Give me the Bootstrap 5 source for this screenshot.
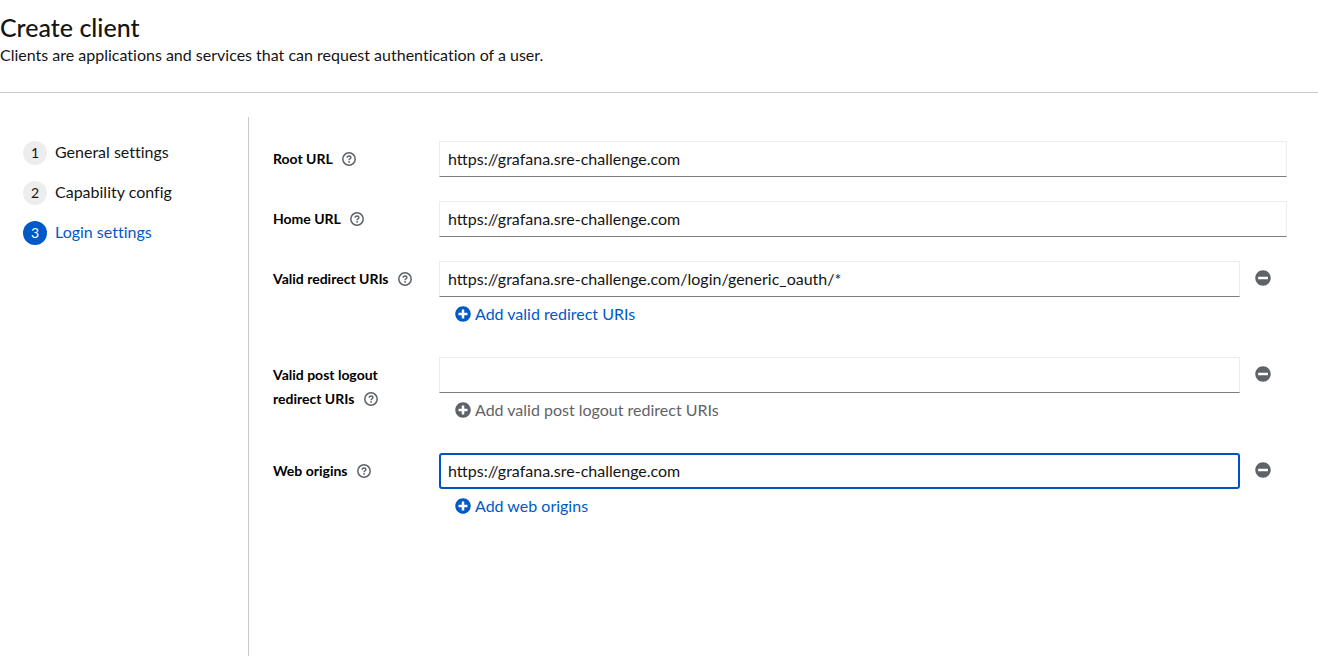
<!DOCTYPE html>
<html lang="en">
<head>
<meta charset="utf-8">
<meta name="viewport" content="width=device-width, initial-scale=1">
<title>Create client</title>
<link href="https://cdn.jsdelivr.net/npm/bootstrap@5.3.0/dist/css/bootstrap.min.css" rel="stylesheet">
<style>
  :root { --ink: #151515; --accent: #0059c8; --muted: #5f6368; --line: #c9c9c9; }
  body { font-family: Lato, "Noto Sans", sans-serif; font-size: 16px; line-height: 24px; font-variant-ligatures: none; color: var(--ink); background: #fff; }
  .page-head { padding: 12px 0 25px; border-bottom: 1px solid var(--line); }
  .page-head h1 { font-size: 25px; line-height: 31px; font-weight: 500; }
  .steps { flex: 0 0 249px; padding: 24px 23px; border-right: 1px solid var(--line); }
  .steps ol { gap: 16px; }
  .steps a { color: var(--ink); gap: 8px; }
  .steps a.current { color: var(--accent); }
  .step-name { padding-bottom: 2px; line-height: 22px; }
  .step-no { width: 24px; height: 24px; font-size: 14px; background: #ededed; }
  .current .step-no { background: var(--accent); color: #fff; }
  .client-form { padding: 24px 31px 24px 24px; gap: 24px; }
  .field { display: grid; grid-template-columns: 150px minmax(0, 1fr); column-gap: 16px; }
  .field-label { padding-top: 6px; font-size: 14px; color: #000; }
  .field-label label { display: inline; font-weight: 700; }
  .field .help { margin-left: 6px; color: var(--muted); line-height: 14px; vertical-align: -2px; }
  .field .form-control { height: 36px; padding: 0 8px 2px; font-size: 16px; color: var(--ink); border: 1px solid #ededed; border-bottom-color: #7c7f82; border-radius: 0; box-shadow: none; }
  .field .form-control.is-current { border: 2px solid #0053c0; border-radius: 3px; padding: 0 7px 2px; }
  .btn-minus { height: 34px; padding: 0 16px 0 15px; color: var(--muted); }
  .btn-add { height: 36px; padding: 0 16px 2px; gap: 4px; font-size: 16px; color: var(--accent); }
  .btn-add:disabled { color: var(--muted); opacity: 1; }
  svg { display: block; fill: currentColor; }
</style>
</head>
<body class="d-flex flex-column min-vh-100">
<svg class="d-none" aria-hidden="true">
  <symbol id="i-plus" viewBox="0 0 512 512"><path d="M256 8C119 8 8 119 8 256s111 248 248 248 248-111 248-248S393 8 256 8zm144 276c0 7-5 12-12 12h-92v92c0 7-5 12-12 12h-56c-7 0-12-5-12-12v-92h-92c-7 0-12-5-12-12v-56c0-7 5-12 12-12h92v-92c0-7 5-12 12-12h56c7 0 12 5 12 12v92h92c7 0 12 5 12 12v56z"/></symbol>
  <symbol id="i-minus" viewBox="0 0 512 512"><path d="M256 8C119 8 8 119 8 256s111 248 248 248 248-111 248-248S393 8 256 8zM112 296c-7 0-12-5-12-12v-56c0-7 5-12 12-12h288c7 0 12 5 12 12v56c0 7-5 12-12 12H112z"/></symbol>
  <symbol id="i-help" viewBox="0 0 14 14"><circle cx="7" cy="7" r="6.200" fill="none" stroke="currentColor" stroke-width="1.500"/><path d="M5.200 5.700C5.200 4.500 6 3.900 7.100 3.900S8.900 4.500 8.900 5.500C8.900 6.700 7.100 6.800 7.100 8.200" fill="none" stroke="currentColor" stroke-width="1.500"/><circle cx="7.100" cy="9.900" r=".9"/></symbol>
</svg>

<header class="page-head">
  <h1 class="mb-0">Create client</h1>
  <p class="mb-0">Clients are applications and services that can request authentication of a user.</p>
</header>

<div class="d-flex flex-grow-1 pt-4">
  <nav class="steps" aria-label="Steps">
    <ol class="list-unstyled d-flex flex-column mb-0">
      <li><a class="d-flex align-items-center text-decoration-none" href="#general"><span class="step-no rounded-circle d-flex align-items-center justify-content-center">1</span><span class="step-name">General settings</span></a></li>
      <li><a class="d-flex align-items-center text-decoration-none" href="#capability"><span class="step-no rounded-circle d-flex align-items-center justify-content-center">2</span><span class="step-name">Capability config</span></a></li>
      <li><a class="current d-flex align-items-center text-decoration-none" href="#login" aria-current="step"><span class="step-no rounded-circle d-flex align-items-center justify-content-center">3</span><span class="step-name">Login settings</span></a></li>
    </ol>
  </nav>

  <form class="client-form flex-grow-1 d-flex flex-column">
    <div class="field">
      <div class="field-label"><label for="root">Root URL</label> <button type="button" class="help btn p-0 border-0" aria-label="Help for Root URL"><svg width="14" height="14"><use href="#i-help"/></svg></button></div>
      <input class="form-control" id="root" type="text" value="https://grafana.sre-challenge.com">
    </div>
    <div class="field">
      <div class="field-label"><label for="home">Home URL</label> <button type="button" class="help btn p-0 border-0" aria-label="Help for Home URL"><svg width="14" height="14"><use href="#i-help"/></svg></button></div>
      <input class="form-control" id="home" type="text" value="https://grafana.sre-challenge.com">
    </div>
    <div class="field">
      <div class="field-label"><label for="redirect">Valid redirect URIs</label> <button type="button" class="help btn p-0 border-0" aria-label="Help for Valid redirect URIs"><svg width="14" height="14"><use href="#i-help"/></svg></button></div>
      <div>
        <div class="d-flex">
          <input class="form-control" id="redirect" type="text" value="https://grafana.sre-challenge.com/login/generic_oauth/*">
          <button type="button" class="btn-minus btn border-0 flex-shrink-0 d-flex align-items-center" aria-label="Remove"><svg width="16" height="16"><use href="#i-minus"/></svg></button>
        </div>
        <button type="button" class="btn-add btn border-0 d-flex align-items-center"><svg width="16" height="16"><use href="#i-plus"/></svg>Add valid redirect URIs</button>
      </div>
    </div>
    <div class="field">
      <div class="field-label"><label for="logout">Valid post logout redirect URIs</label> <button type="button" class="help btn p-0 border-0" aria-label="Help for Valid post logout redirect URIs"><svg width="14" height="14"><use href="#i-help"/></svg></button></div>
      <div>
        <div class="d-flex">
          <input class="form-control" id="logout" type="text">
          <button type="button" class="btn-minus btn border-0 flex-shrink-0 d-flex align-items-center" aria-label="Remove"><svg width="16" height="16"><use href="#i-minus"/></svg></button>
        </div>
        <button type="button" class="btn-add btn border-0 d-flex align-items-center" disabled><svg width="16" height="16"><use href="#i-plus"/></svg>Add valid post logout redirect URIs</button>
      </div>
    </div>
    <div class="field">
      <div class="field-label"><label for="origins">Web origins</label> <button type="button" class="help btn p-0 border-0" aria-label="Help for Web origins"><svg width="14" height="14"><use href="#i-help"/></svg></button></div>
      <div>
        <div class="d-flex">
          <input class="form-control is-current" id="origins" type="text" value="https://grafana.sre-challenge.com">
          <button type="button" class="btn-minus btn border-0 flex-shrink-0 d-flex align-items-center" aria-label="Remove"><svg width="16" height="16"><use href="#i-minus"/></svg></button>
        </div>
        <button type="button" class="btn-add btn border-0 d-flex align-items-center"><svg width="16" height="16"><use href="#i-plus"/></svg>Add web origins</button>
      </div>
    </div>
  </form>
</div>
<script src="https://cdn.jsdelivr.net/npm/bootstrap@5.3.0/dist/js/bootstrap.bundle.min.js"></script>
</body>
</html>
